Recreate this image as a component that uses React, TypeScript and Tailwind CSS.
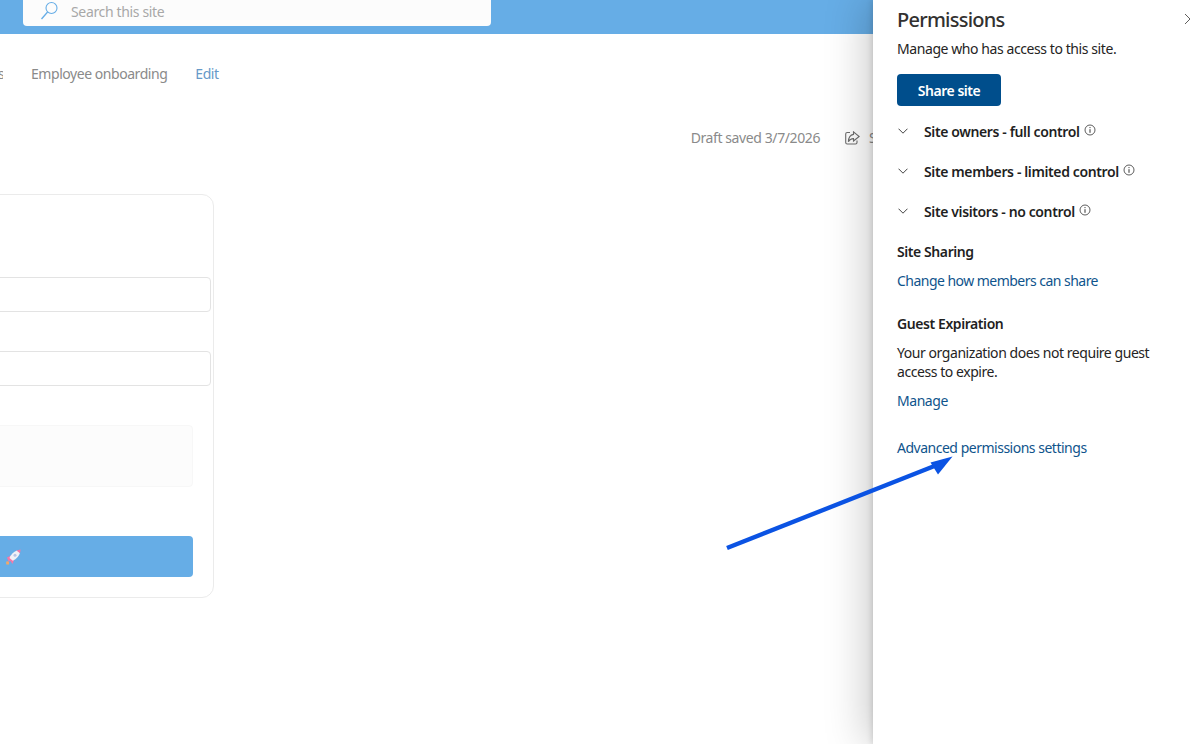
import React from "react";

const font = "font-['Noto_Sans','Open_Sans',sans-serif]";

function SearchIcon() {
  return (
    <svg width="20" height="20" viewBox="0 0 20 20" fill="none" stroke="#66ade6" strokeWidth="1.1">
      <circle cx="11.5" cy="7" r="5.5" />
      <path d="M7.6 11 L1.5 18" strokeWidth="1.3" />
    </svg>
  );
}

function ShareIcon() {
  return (
    <svg width="15" height="14" viewBox="0 0 15 14" fill="none" stroke="#6e6e6e" strokeWidth="1.1">
      <path d="M5 1.5 H2.2 Q0.7 1.5 0.7 3 V11.5 Q0.7 13 2.2 13 H10.5 Q12 13 12 11.5 V9.5" />
      <path d="M8.5 0.8 L14.2 5.5 L8.5 10 V7.6 Q5 7.6 3.4 10.8 Q3.6 4.2 8.5 3.4 Z" />
    </svg>
  );
}

function Rocket() {
  return (
    <svg width="15" height="16" viewBox="0 0 15 16">
      <path d="M2.8 12 L0.2 15.5 L0.4 12.5 Z" fill="#f0a868" />
      <path d="M0.5 13 H3 V15.5 H0.5 Z" fill="#f0a868" />
      <path d="M1 8.5 L5 6.5 L8 11 L6.5 15 L4.5 12 L2.5 12.5 Z" fill="#f478a8" />
      <path d="M3.5 9 Q5.5 3.8 11 1.5 L14 3.8 Q12.5 9 6.8 11.8 Z" fill="#f1f1f7" />
      <circle cx="9" cy="6.2" r="1.5" fill="#b9c4e4" />
      <path d="M10.5 1.6 L14.6 0.4 L14 4.2 Z" fill="#f478a8" />
    </svg>
  );
}

function Chevron() {
  return (
    <svg width="10" height="6" viewBox="0 0 10 6" fill="none" stroke="#444" strokeWidth="1">
      <path d="M0.5 0.7 L5 5.2 L9.5 0.7" />
    </svg>
  );
}

function InfoIcon() {
  return (
    <svg width="12" height="12" viewBox="0 0 12 12" fill="none" stroke="#333" strokeWidth="0.8">
      <circle cx="6" cy="6" r="5" />
      <path d="M6 5.2 V8.8" strokeWidth="1" />
      <circle cx="6" cy="3.6" r="0.6" fill="#333" stroke="none" />
    </svg>
  );
}

function RoleRow({ label }: { label: string }) {
  return (
    <div className="flex h-10 items-center">
      <div className="flex w-[27px] pl-px">
        <Chevron />
      </div>
      <span className="text-[14px] font-semibold tracking-[-0.38px] text-[#1f1f1f]">{label}</span>
      <span className="-mt-[3px] ml-[4px]">
        <InfoIcon />
      </span>
    </div>
  );
}

export default function App() {
  return (
    <div className={`relative flex h-screen w-full overflow-hidden bg-white ${font}`}>
      <div className="flex min-w-0 flex-1 flex-col">
        <div className="h-[34px] shrink-0 bg-[#66ade6] pl-[23px]">
          <div className="flex h-[26px] w-[468px] items-center rounded-b-[4px] bg-[#fcfcfc] pb-[4px] pl-[17px]">
            <SearchIcon />
            <span className="ml-[11px] text-[14px] tracking-[-0.35px] text-[#a8a8a8]">Search this site</span>
          </div>
        </div>

        <div className="flex h-[78px] items-center gap-[28px] text-[14px] tracking-[-0.45px] text-[#8a8a8a]">
          <span className="-ml-[2px] w-[5px] overflow-hidden">s</span>
          <span>Employee onboarding</span>
          <span className="text-[#6699c8]">Edit</span>
        </div>

        <div className="-mr-[16px] flex h-[82px] shrink-0 items-start justify-end pt-[15px] text-[14px] tracking-[-0.4px] text-[#8a8a8a]">
          <span>Draft saved 3/7/2026</span>
          <span className="ml-[25px] mt-[4px]">
            <ShareIcon />
          </span>
          <span className="ml-[9px] w-[20px]">Share</span>
        </div>

        <div className="-ml-[200px] h-[404px] w-[414px] shrink-0 rounded-[12px] border border-[#ebebeb] bg-white pl-[1px] pr-[2px] pt-[82px]">
          <div className="h-[35px] rounded-[4px] border border-[#e3e3e3]" />
          <div className="mt-[39px] h-[35px] rounded-[4px] border border-[#e3e3e3]" />
          <div className="mr-[18px] mt-[39px] h-[62px] rounded-[4px] border border-[#f7f7f7] bg-[#fcfcfc]" />
          <div className="mr-[18px] mt-[49px] flex h-[41px] items-center justify-end rounded-[4px] bg-[#66ade6] pr-[172px]">
            <Rocket />
          </div>
        </div>
      </div>

      <aside className="z-10 flex w-[318px] shrink-0 flex-col bg-white pl-[24px] shadow-[-6px_0_40px_rgba(0,0,0,0.22),-1px_0_6px_rgba(0,0,0,0.14)]">
        <div className="flex h-[40px] items-center justify-between">
          <h1 className="text-[20px] font-medium tracking-[-0.75px] text-[#323130]">Permissions</h1>
          <svg className="-mr-[3px] -mt-[2px]" width="10" height="12" viewBox="0 0 10 12" fill="none" stroke="#605e5c" strokeWidth="1">
            <path d="M1 1 L6 6 L1 11" />
          </svg>
        </div>
        <p className="-mt-[2px] text-[14px] tracking-[-0.42px] text-[#252423]">Manage who has access to this site.</p>
        <button className="mt-[15px] h-[32px] w-[104px] rounded-[4px] bg-[#004e8c] text-[14px] font-semibold tracking-[-0.45px] text-white">
          Share site
        </button>
        <div className="mt-[5px]">
          <RoleRow label="Site owners - full control" />
          <RoleRow label="Site members - limited control" />
          <RoleRow label="Site visitors - no control" />
        </div>
        <h2 className="mt-[10px] text-[14px] font-semibold tracking-[-0.42px] text-[#1f1f1f]">Site Sharing</h2>
        <a className="mt-[8px] text-[14px] tracking-[-0.53px] text-[#0f548c]">Change how members can share</a>
        <h2 className="mt-[22px] text-[14px] font-semibold tracking-[-0.42px] text-[#1f1f1f]">Guest Expiration</h2>
        <p className="mt-[9px] w-[270px] text-[14px] leading-[19px] tracking-[-0.44px] text-[#252423]">
          Your organization does not require guest access to expire.
        </p>
        <a className="mt-[9px] text-[14px] tracking-[-0.45px] text-[#0f548c]">Manage</a>
        <a className="mt-[26px] text-[14px] tracking-[-0.49px] text-[#0f548c]">Advanced permissions settings</a>
      </aside>

      {/* annotation arrow drawn over the page */}
      <svg className="absolute left-[720px] top-[450px] z-20" width="240" height="105" viewBox="0 0 240 105" fill="none">
        <path d="M7 98 L217 15" stroke="#0b53e3" strokeWidth="4.4" />
        <path d="M232.5 6.5 L210.5 12.5 L218 24.5 Z" fill="#0b53e3" />
      </svg>
    </div>
  );
}
